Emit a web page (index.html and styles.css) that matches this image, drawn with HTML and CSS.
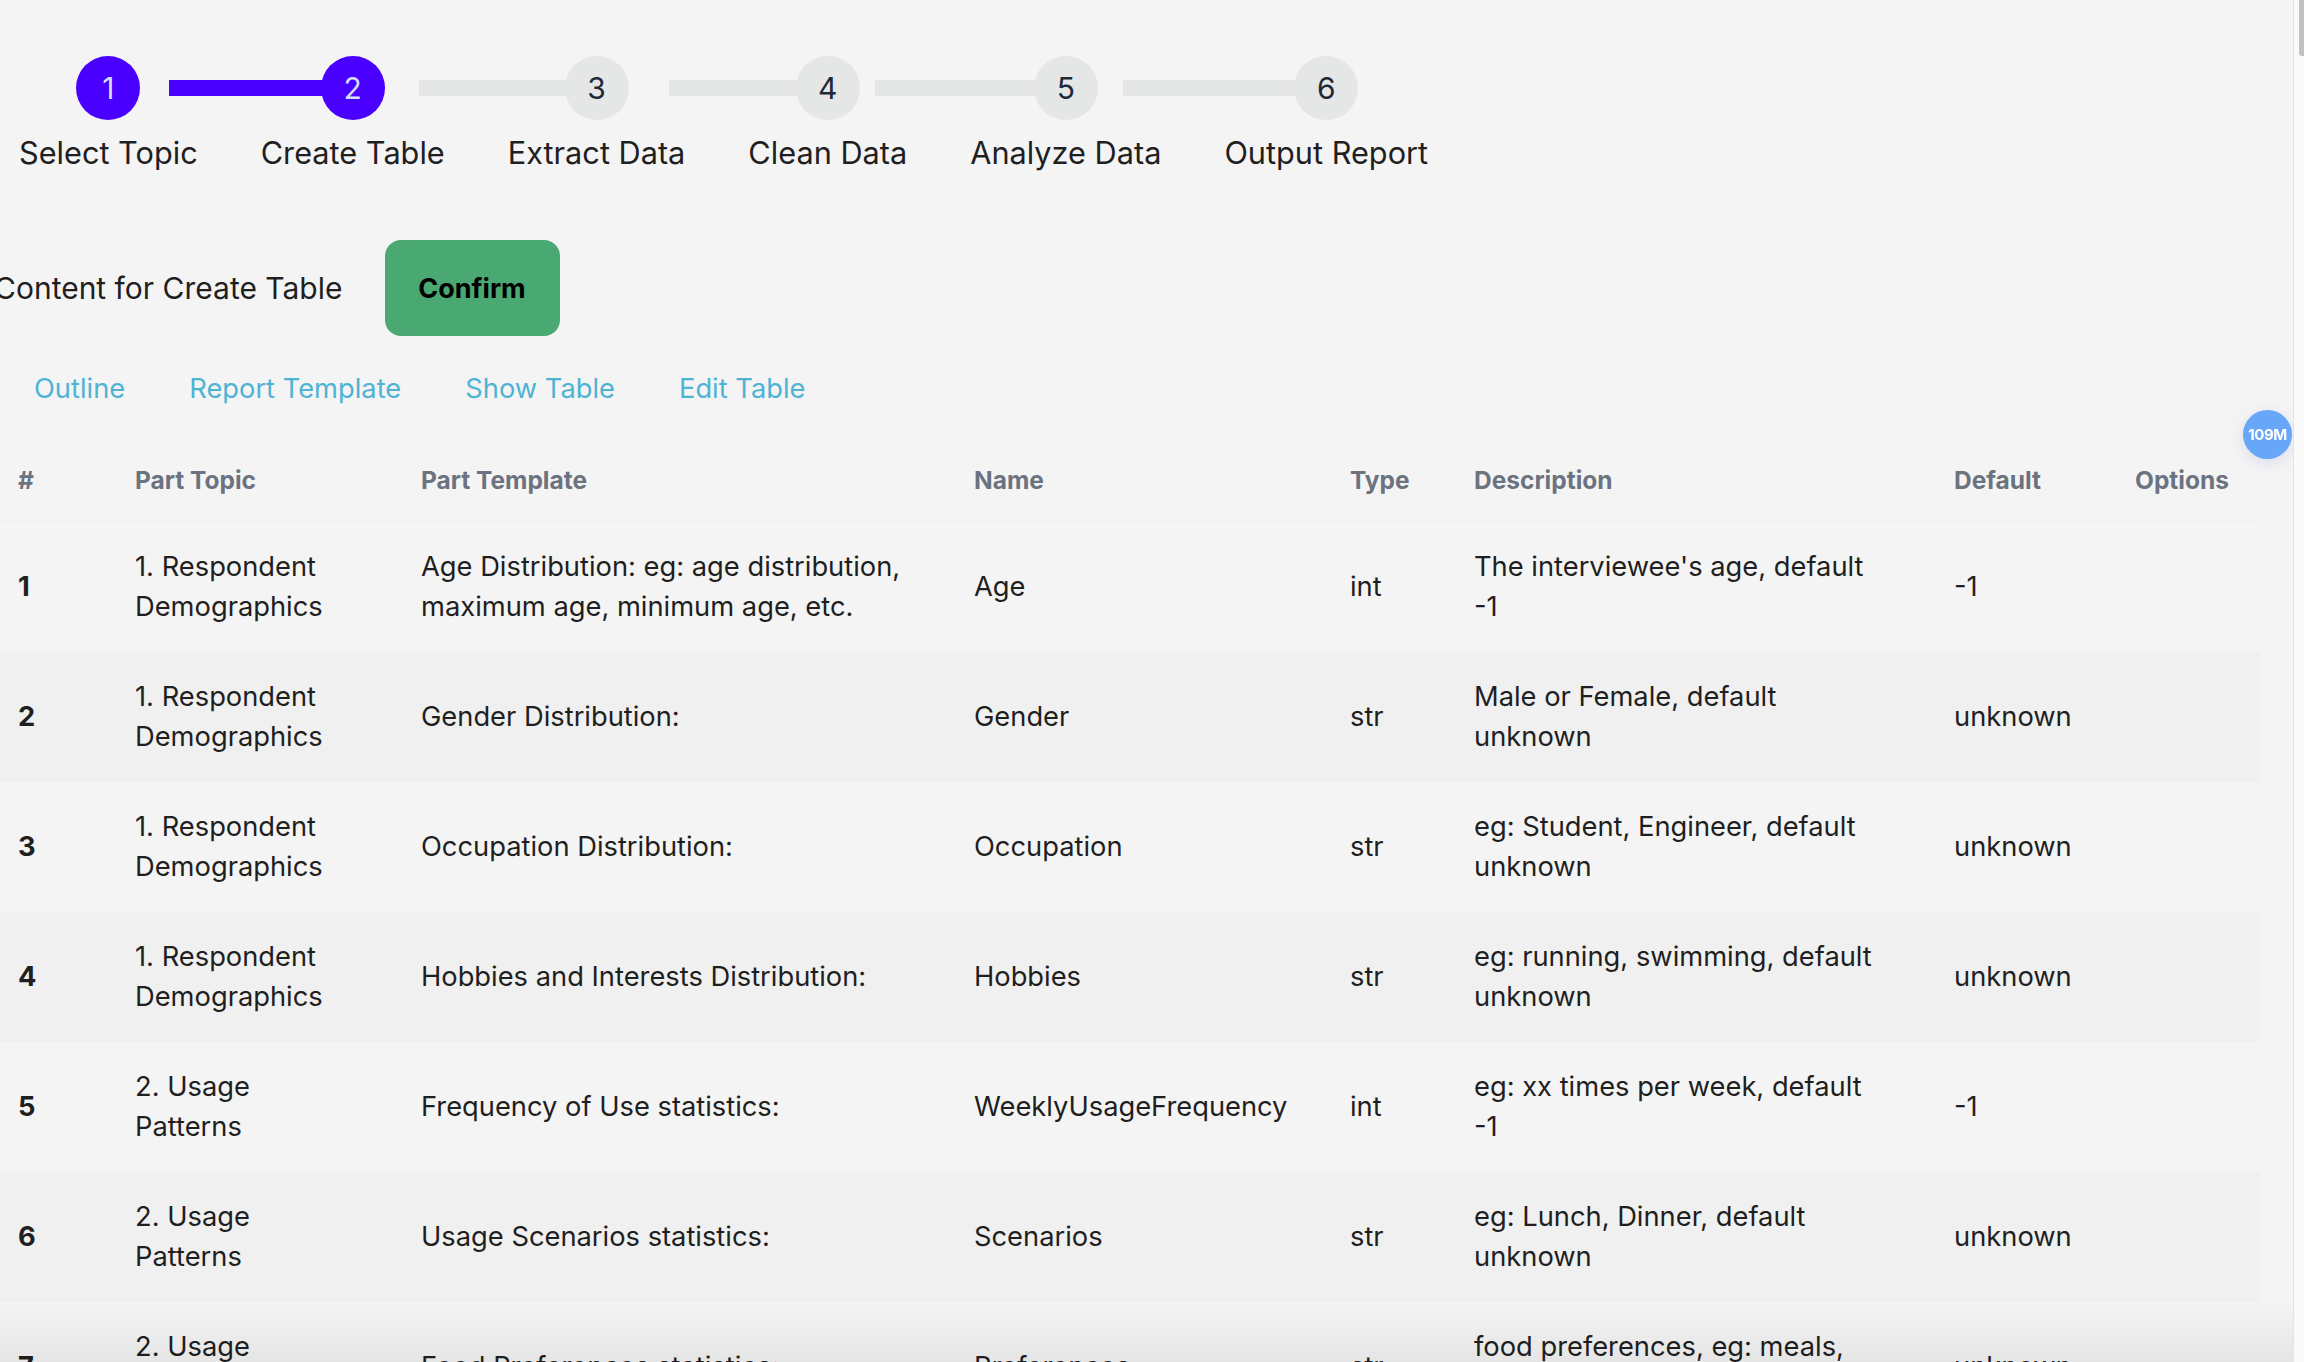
FILE: index.html
```html
<!DOCTYPE html>
<html lang="en">
<head>
<meta charset="utf-8">
<title>Create Table</title>
<link rel="stylesheet" href="styles.css">
</head>
<body>
<main class="page">
  <ol class="steps">
    <li class="step active"><span class="dot">1</span><span class="label">Select Topic</span></li>
    <li class="step active"><span class="dot">2</span><span class="label">Create Table</span></li>
    <li class="step"><span class="dot">3</span><span class="label">Extract Data</span></li>
    <li class="step"><span class="dot">4</span><span class="label">Clean Data</span></li>
    <li class="step"><span class="dot">5</span><span class="label">Analyze Data</span></li>
    <li class="step"><span class="dot">6</span><span class="label">Output Report</span></li>
  </ol>

  <div class="title-row">
    <h2 class="title">Content for Create Table</h2>
    <button class="confirm" type="button">Confirm</button>
  </div>

  <nav class="tabs">
    <a class="tab">Outline</a>
    <a class="tab">Report Template</a>
    <a class="tab">Show Table</a>
    <a class="tab">Edit Table</a>
  </nav>

  <table class="table">
    <colgroup>
      <col class="c-num"><col class="c-topic"><col class="c-tpl"><col class="c-name">
      <col class="c-type"><col class="c-desc"><col class="c-def"><col class="c-opt">
    </colgroup>
    <thead>
      <tr><th>#</th><th>Part Topic</th><th>Part Template</th><th>Name</th><th>Type</th><th>Description</th><th>Default</th><th>Options</th></tr>
    </thead>
    <tbody>
      <tr><th>1</th><td class="topic">1. Respondent Demographics</td><td>Age Distribution: eg: age distribution, maximum age, minimum age, etc.</td><td>Age</td><td>int</td><td class="desc">The interviewee's age, default -1</td><td>-1</td><td></td></tr>
      <tr><th>2</th><td class="topic">1. Respondent Demographics</td><td>Gender Distribution:</td><td>Gender</td><td>str</td><td class="desc">Male or Female, default unknown</td><td>unknown</td><td></td></tr>
      <tr><th>3</th><td class="topic">1. Respondent Demographics</td><td>Occupation Distribution:</td><td>Occupation</td><td>str</td><td class="desc">eg: Student, Engineer, default unknown</td><td>unknown</td><td></td></tr>
      <tr><th>4</th><td class="topic">1. Respondent Demographics</td><td>Hobbies and Interests Distribution:</td><td>Hobbies</td><td>str</td><td class="desc">eg: running, swimming, default unknown</td><td>unknown</td><td></td></tr>
      <tr><th>5</th><td class="topic">2. Usage Patterns</td><td>Frequency of Use statistics:</td><td>WeeklyUsageFrequency</td><td>int</td><td class="desc">eg: xx times per week, default -1</td><td>-1</td><td></td></tr>
      <tr><th>6</th><td class="topic">2. Usage Patterns</td><td>Usage Scenarios statistics:</td><td>Scenarios</td><td>str</td><td class="desc">eg: Lunch, Dinner, default unknown</td><td>unknown</td><td></td></tr>
      <tr><th>7</th><td class="topic">2. Usage Patterns</td><td>Food Preferences statistics:</td><td>Preferences</td><td>str</td><td class="desc">food preferences, eg: meals, snacks, default unknown</td><td>unknown</td><td></td></tr>
    </tbody>
  </table>
</main>

<div class="mem-badge">109M</div>
<div class="scrollbar"><span class="thumb"></span></div>
<div class="bottom-fade"></div>
</body>
</html>
```

FILE: styles.css
```css
html, body {
  margin: 0;
  padding: 0;
  height: 100%;
  overflow: hidden;
}

body {
  background: #f4f4f4;
  color: #1f1f1f;
  font-family: Inter, "Liberation Sans", sans-serif;
}

.page {
  margin-left: -6px;
  width: 2290px;
}

/* ---------- steps ---------- */
.steps {
  list-style: none;
  margin: 0;
  padding: 56px 0 0 25px;
  display: flex;
  gap: 63px;
}

.step {
  position: relative;
  display: flex;
  flex-direction: column;
  align-items: center;
  gap: 13px;
}

.step + .step::before {
  content: "";
  position: absolute;
  top: 24px;
  right: 50%;
  width: 100%;
  height: 16px;
  background: #e5e6e6;
}

.step.active + .step.active::before {
  background: #4a00ff;
}

.dot {
  position: relative;
  z-index: 1;
  width: 64px;
  height: 64px;
  border-radius: 50%;
  background: #e5e6e6;
  color: #1f2937;
  display: flex;
  align-items: center;
  justify-content: center;
  font-size: 30px;
}

.step.active .dot {
  background: #4a00ff;
  color: #d6dcff;
}

.label {
  font-size: 30.7px;
  line-height: 40px;
  white-space: nowrap;
}

/* ---------- title row ---------- */
.title-row {
  margin-top: 67px;
  display: flex;
  align-items: center;
  gap: 42px;
}

.title {
  margin: 0;
  font-size: 30px;
  font-weight: 400;
  white-space: nowrap;
}

.confirm {
  width: 175px;
  height: 96px;
  border: none;
  border-radius: 16px;
  background: #4aa873;
  color: #000;
  font-family: inherit;
  font-size: 27px;
  font-weight: 700;
}

/* ---------- tabs ---------- */
.tabs {
  margin-top: 25px;
  display: flex;
  padding-left: 8px;
}

.tab {
  height: 54px;
  padding: 0 32px;
  display: flex;
  align-items: center;
  font-size: 27.3px;
  color: #4fb3d4;
}

/* ---------- table ---------- */
.table {
  margin-top: 24px;
  border-collapse: collapse;
  table-layout: fixed;
  width: 2266px;
  font-size: 27.3px;
  line-height: 40px;
}

.c-num { width: 117px; }
.c-topic { width: 286px; }
.c-tpl { width: 553px; }
.c-name { width: 376px; }
.c-type { width: 124px; }
.c-desc { width: 480px; }
.c-def { width: 181px; }
.c-opt { width: 149px; }

.table th,
.table td {
  text-align: left;
  vertical-align: middle;
  padding: 25px 24px;
}

.table thead th {
  padding: 24px 24px;
  font-size: 24.5px;
  line-height: 34px;
  font-weight: 700;
  color: #6b7280;
  white-space: nowrap;
}

.table thead tr {
  border-bottom: 1px solid #efefef;
}

.table tbody th {
  font-weight: 700;
}

.table tbody tr:nth-child(even) {
  background: #f0f0f0;
}

.table td.topic {
  padding-right: 52px;
}

.table td.desc {
  padding-right: 51px;
}

/* ---------- overlays ---------- */
.mem-badge {
  position: fixed;
  top: 410px;
  right: 12px;
  width: 49px;
  height: 49px;
  border-radius: 50%;
  background: #68a6f8;
  color: #fff;
  font-size: 15px;
  font-weight: 700;
  letter-spacing: -0.5px;
  display: flex;
  align-items: center;
  justify-content: center;
  box-shadow: 0 4px 14px rgba(100, 120, 200, 0.18);
}

.scrollbar {
  position: fixed;
  top: 0;
  right: 0;
  width: 10px;
  height: 100%;
  background: #fafafa;
  border-left: 1px solid #e4e4e4;
}

.thumb {
  display: block;
  margin-left: 5px;
  width: 5px;
  height: 56px;
  border-radius: 0 0 0 3px;
  background: #c2c2c2;
}

.bottom-fade {
  position: fixed;
  left: 0;
  right: 11px;
  bottom: 0;
  height: 60px;
  background: linear-gradient(to bottom, rgba(0, 0, 0, 0), rgba(0, 0, 0, 0.06));
  pointer-events: none;
}
```
